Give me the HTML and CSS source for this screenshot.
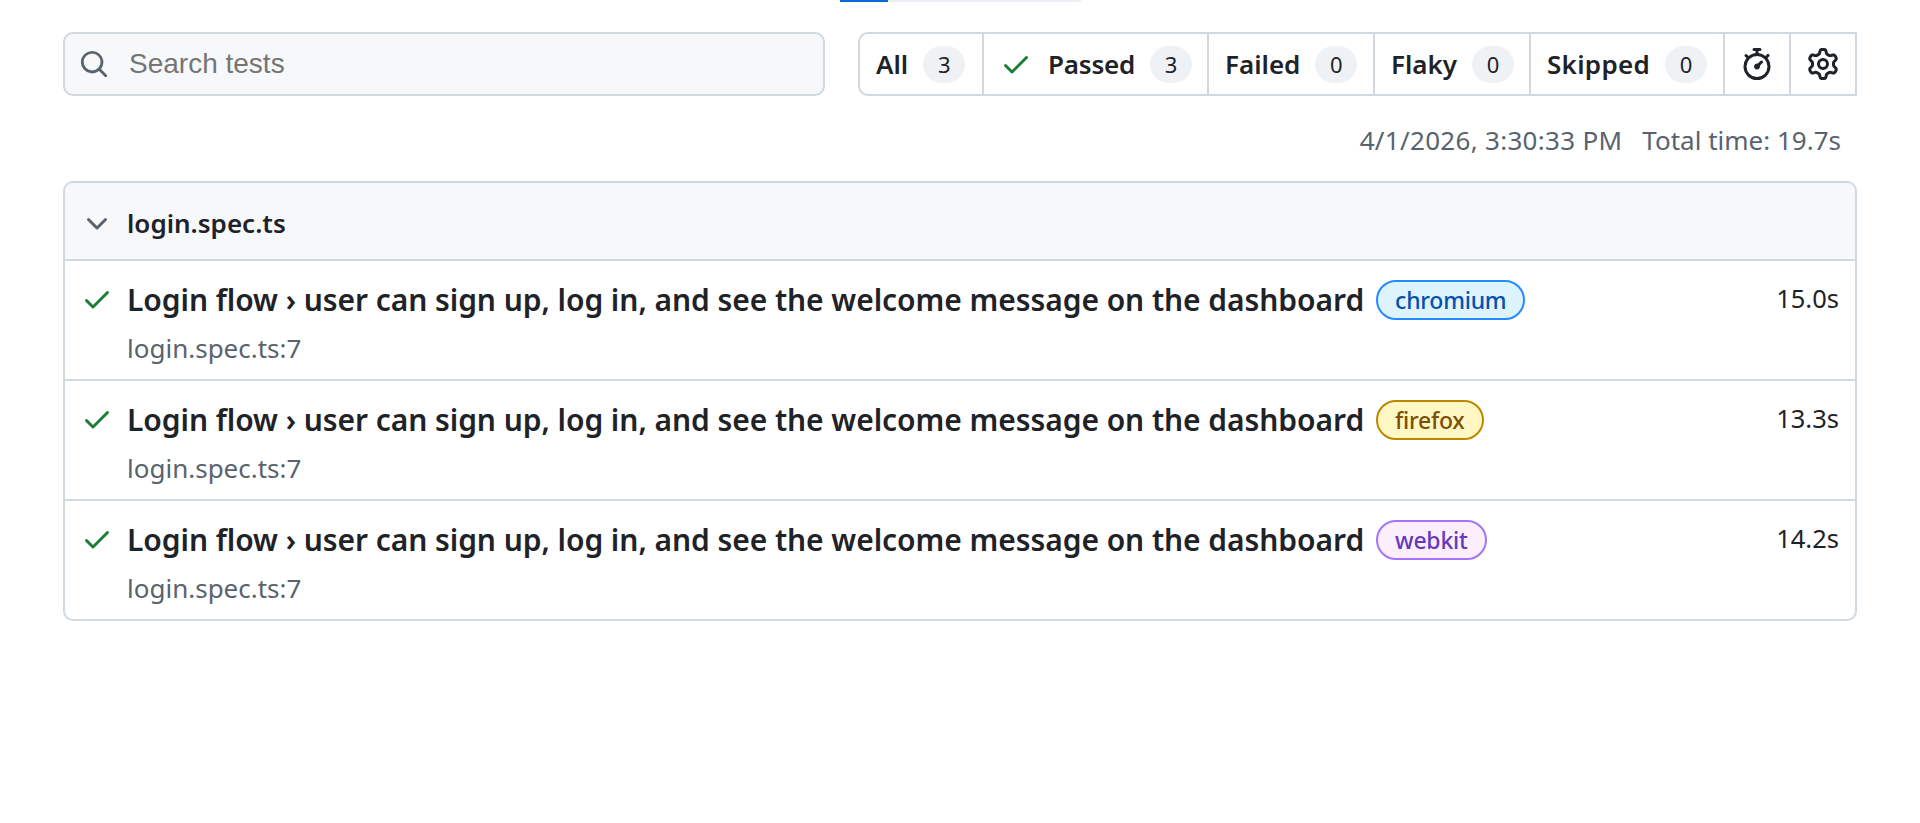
FILE: index.html
```html
<!DOCTYPE html>
<html lang="en">
<head>
<meta charset="utf-8">
<title>Playwright Test Report</title>
<link rel="stylesheet" href="styles.css">
</head>
<body>
<svg class="defs" width="0" height="0" aria-hidden="true">
  <symbol id="i-check" viewBox="0 0 16 16"><path d="M13.78 4.22a.75.75 0 0 1 0 1.06l-7.25 7.25a.75.75 0 0 1-1.06 0L2.22 9.28a.751.751 0 0 1 .018-1.042.751.751 0 0 1 1.042-.018L6 10.94l6.72-6.72a.75.75 0 0 1 1.06 0Z"/></symbol>
</svg>
<div class="progress"><div class="progress-track"><div class="progress-fill"></div></div></div>
<main class="page">
  <div class="toolbar">
    <form class="search">
      <svg class="search-icon" viewBox="0 0 16 16"><path d="M10.68 11.74a6 6 0 0 1-7.922-8.982 6 6 0 0 1 8.982 7.922l3.04 3.04a.749.749 0 0 1-.326 1.275.749.749 0 0 1-.734-.215ZM11.5 7a4.499 4.499 0 1 0-8.997 0A4.499 4.499 0 0 0 11.5 7Z"/></svg>
      <input class="search-input" type="search" placeholder="Search tests">
    </form>
    <nav class="filters">
      <a class="filter w-all">All<span class="count">3</span></a>
      <a class="filter w-passed"><svg class="check filter-check"><use href="#i-check"/></svg>Passed<span class="count">3</span></a>
      <a class="filter w-failed">Failed<span class="count">0</span></a>
      <a class="filter w-flaky">Flaky<span class="count">0</span></a>
      <a class="filter w-skipped">Skipped<span class="count">0</span></a>
      <a class="filter filter-icon"><svg class="tool-icon" viewBox="0 0 16 16"><path d="M5.75.75A.75.75 0 0 1 6.5 0h3a.75.75 0 0 1 0 1.5h-.75v1l-.001.041a6.724 6.724 0 0 1 3.464 1.435l.007-.006.75-.75a.75.75 0 1 1 1.06 1.06l-.75.75-.006.007a6.75 6.75 0 1 1-10.548 0L2.72 5.03l-.75-.75a.75.75 0 0 1 1.06-1.06l.75.75.007.006A6.72 6.72 0 0 1 7.25 2.541V1.5H6.5a.75.75 0 0 1-.75-.75ZM8 14.5A5.25 5.25 0 1 0 8 4a5.25 5.25 0 0 0 0 10.5Zm.389-6.7 1.33-1.33a.75.75 0 1 1 1.061 1.06L9.45 8.861A1.503 1.503 0 0 1 8 10.75a1.499 1.499 0 1 1 .389-2.95Z"/></svg></a>
      <a class="filter filter-icon"><svg class="tool-icon" viewBox="0 0 16 16"><path d="M8 0a8.2 8.2 0 0 1 .701.031C9.444.095 9.99.645 10.16 1.29l.288 1.107c.018.066.079.158.212.224.231.114.454.243.668.386.123.082.233.09.299.071l1.103-.303c.644-.176 1.392.021 1.82.63.27.385.506.792.704 1.218.315.675.111 1.422-.364 1.891l-.814.806c-.049.048-.098.147-.088.294.016.257.016.515 0 .772-.01.147.038.246.088.294l.814.806c.475.469.679 1.216.364 1.891a7.977 7.977 0 0 1-.704 1.217c-.428.61-1.176.807-1.82.63l-1.102-.302c-.067-.019-.177-.011-.3.071a5.909 5.909 0 0 1-.668.386c-.133.066-.194.158-.211.224l-.29 1.106c-.168.646-.715 1.196-1.458 1.26a8.006 8.006 0 0 1-1.402 0c-.743-.064-1.289-.614-1.458-1.26l-.289-1.106c-.018-.066-.079-.158-.212-.224a5.738 5.738 0 0 1-.668-.386c-.123-.082-.233-.09-.299-.071l-1.103.303c-.644.176-1.392-.021-1.82-.63a8.12 8.12 0 0 1-.704-1.218c-.315-.675-.111-1.422.363-1.891l.815-.806c.05-.048.098-.147.088-.294a6.214 6.214 0 0 1 0-.772c.01-.147-.038-.246-.088-.294l-.815-.806C.635 6.045.431 5.298.746 4.623a7.92 7.92 0 0 1 .704-1.217c.428-.61 1.176-.807 1.82-.63l1.102.302c.067.019.177.011.3-.071.214-.143.437-.272.668-.386.133-.066.194-.158.211-.224l.29-1.106C6.009.645 6.556.095 7.299.03 7.53.01 7.764 0 8 0Zm-.571 1.525c-.036.003-.108.036-.137.146l-.289 1.105c-.147.561-.549.967-.998 1.189-.173.086-.34.183-.5.29-.417.278-.97.423-1.529.27l-1.103-.303c-.109-.03-.175.016-.195.045-.22.312-.412.644-.573.99-.014.031-.021.11.059.19l.815.806c.411.406.562.957.53 1.456a4.709 4.709 0 0 0 0 .582c.032.499-.119 1.05-.53 1.456l-.815.806c-.081.08-.073.159-.059.19.162.346.353.677.573.989.02.03.085.076.195.046l1.102-.303c.56-.153 1.113-.008 1.53.27.161.107.328.204.501.29.447.222.85.629.997 1.189l.289 1.105c.029.109.101.143.137.146a6.6 6.6 0 0 0 1.142 0c.036-.003.108-.036.137-.146l.289-1.105c.147-.561.549-.967.998-1.189.173-.086.34-.183.5-.29.417-.278.97-.423 1.529-.27l1.103.303c.109.029.175-.016.195-.045.22-.313.411-.644.573-.99.014-.031.021-.11-.059-.19l-.815-.806c-.411-.406-.562-.957-.53-1.456a4.709 4.709 0 0 0 0-.582c-.032-.499.119-1.05.53-1.456l.815-.806c.081-.08.073-.159.059-.19a6.464 6.464 0 0 0-.573-.989c-.02-.03-.085-.076-.195-.046l-1.102.303c-.56.153-1.113.008-1.53-.27a4.44 4.44 0 0 0-.501-.29c-.447-.222-.85-.629-.997-1.189l-.289-1.105c-.029-.11-.101-.143-.137-.146a6.6 6.6 0 0 0-1.142 0ZM11 8a3 3 0 1 1-6 0 3 3 0 0 1 6 0ZM9.5 8a1.5 1.5 0 1 0-3.001.001A1.5 1.5 0 0 0 9.5 8Z"/></svg></a>
    </nav>
  </div>
  <div class="meta"><span class="meta-date">4/1/2026, 3:30:33 PM</span><span>Total time: 19.7s</span></div>
  <section class="group">
    <header class="group-head">
      <svg class="row-icon chevron" viewBox="0 0 16 16"><path d="M12.78 5.22a.749.749 0 0 1 0 1.06l-4.25 4.25a.749.749 0 0 1-1.06 0L3.22 6.28a.749.749 0 1 1 1.06-1.06L8 8.939l3.72-3.719a.749.749 0 0 1 1.06 0Z"/></svg>
      <span class="group-title">login.spec.ts</span>
    </header>
    <article class="test">
      <svg class="check row-icon"><use href="#i-check"/></svg>
      <div class="test-body">
        <div class="test-line"><span class="test-title">Login flow › user can sign up, log in, and see the welcome message on the dashboard</span><span class="tag tag-blue">chromium</span></div>
        <div class="test-file">login.spec.ts:7</div>
      </div>
      <div class="test-time">15.0s</div>
    </article>
    <article class="test">
      <svg class="check row-icon"><use href="#i-check"/></svg>
      <div class="test-body">
        <div class="test-line"><span class="test-title">Login flow › user can sign up, log in, and see the welcome message on the dashboard</span><span class="tag tag-yellow">firefox</span></div>
        <div class="test-file">login.spec.ts:7</div>
      </div>
      <div class="test-time">13.3s</div>
    </article>
    <article class="test">
      <svg class="check row-icon"><use href="#i-check"/></svg>
      <div class="test-body">
        <div class="test-line"><span class="test-title">Login flow › user can sign up, log in, and see the welcome message on the dashboard</span><span class="tag tag-purple">webkit</span></div>
        <div class="test-file">login.spec.ts:7</div>
      </div>
      <div class="test-time">14.2s</div>
    </article>
  </section>
</main>
</body>
</html>
```
FILE: styles.css
```css
* { box-sizing: border-box; }
html, body { margin: 0; background: #fff; }
body {
  font-family: "Noto Sans", "Open Sans", sans-serif;
  color: #1f2328;
  height: 823px;
  overflow: hidden;
}
.defs { position: absolute; }
.progress { height: 2px; display: flex; padding-left: 840px; }
.progress-track { width: 241px; height: 2px; background: #eaeef2; }
.progress-fill { width: 48px; height: 2px; background: #0969da; }
.page { padding: 30px 63px 0; }
.toolbar { display: flex; gap: 33px; height: 64px; }
.search {
  width: 762px;
  flex: none;
  display: flex;
  align-items: center;
  gap: 20px;
  padding-left: 14px;
  background: #f6f8fa;
  border: 2px solid #d1d9e0;
  border-radius: 10px;
}
.search-icon { width: 30px; height: 30px; fill: #59636e; flex: none; }
.search-input {
  flex: 1;
  border: 0;
  outline: 0;
  background: transparent;
  font: 28px "Liberation Sans", sans-serif;
  color: #1f2328;
  padding: 0;
}
.search-input::placeholder { color: #757575; opacity: 1; }
.filters { display: flex; flex: 1; }
.filter {
  display: flex;
  align-items: center;
  height: 64px;
  padding-left: 16px;
  border: 2px solid #d1d9e0;
  border-left-width: 0;
  flex: none;
  font-size: 26px;
  font-weight: 600;
  color: #1f2328;
}
.w-all { width: 126px; border-left-width: 2px; border-radius: 10px 0 0 10px; }
.w-passed { width: 225px; letter-spacing: -0.2px; }
.w-failed { width: 166px; }
.w-flaky { width: 156px; }
.w-skipped { width: 194px; letter-spacing: 0.3px; }
.filter-icon { width: 66px; justify-content: center; padding: 0; }
.count {
  display: flex;
  align-items: center;
  justify-content: center;
  width: 42px;
  height: 37px;
  margin-left: 15px;
  background: #eff2f5;
  border-radius: 19px;
  font-size: 22px;
  font-weight: 400;
  letter-spacing: 0;
}
.check { width: 32px; height: 32px; fill: #1a7f37; flex: none; }
.filter-check { margin: 0 16px 0 0; }
.tool-icon { width: 32px; height: 32px; fill: #1f2328; }
.meta {
  display: flex;
  justify-content: flex-end;
  gap: 20px;
  height: 85px;
  padding: 26px 16px 0;
  font-size: 26px;
  line-height: 36px;
  color: #59636e;
}
.meta-date { letter-spacing: 0.3px; }
.group {
  border: 2px solid #d1d9e0;
  border-radius: 10px;
  overflow: hidden;
}
.group-head {
  display: flex;
  align-items: center;
  height: 76px;
  padding: 5px 0 0 16px;
  background: #f6f8fa;
  gap: 14px;
}
.row-icon { width: 32px; height: 32px; flex: none; }
.chevron { fill: #59636e; }
.group-title { padding-bottom: 2px; font-size: 26px; font-weight: 600; }
.test {
  display: flex;
  align-items: flex-start;
  height: 120px;
  padding: 18px 16px 0;
  gap: 14px;
  border-top: 2px solid #d1d9e0;
}
.test .row-icon { margin-top: 4px; fill: #1a7f37; }
.test-body { flex: 1; }
.test-line { display: flex; align-items: center; gap: 12px; height: 40px; }
.test-title { font-size: 30px; font-weight: 600; letter-spacing: -0.06px; white-space: nowrap; }
.tag {
  display: flex;
  align-items: center;
  height: 40px;
  margin-top: 2px;
  padding: 0 17px;
  border: 2px solid;
  border-radius: 20px;
  font-size: 23px;
  font-weight: 500;
  letter-spacing: -0.25px;
}
.tag-blue { background: #ddf4ff; border-color: #218bff; color: #0550ae; }
.tag-yellow { background: #fff8c5; border-color: #bf8700; color: #7d4e00; }
.tag-purple { background: #fbefff; border-color: #a475f9; color: #6639ba; }
.test-file { margin-top: 11px; font-size: 26px; line-height: 36px; color: #59636e; }
.test-time { padding-top: 1px; font-size: 25.5px; line-height: 36px; }
```
